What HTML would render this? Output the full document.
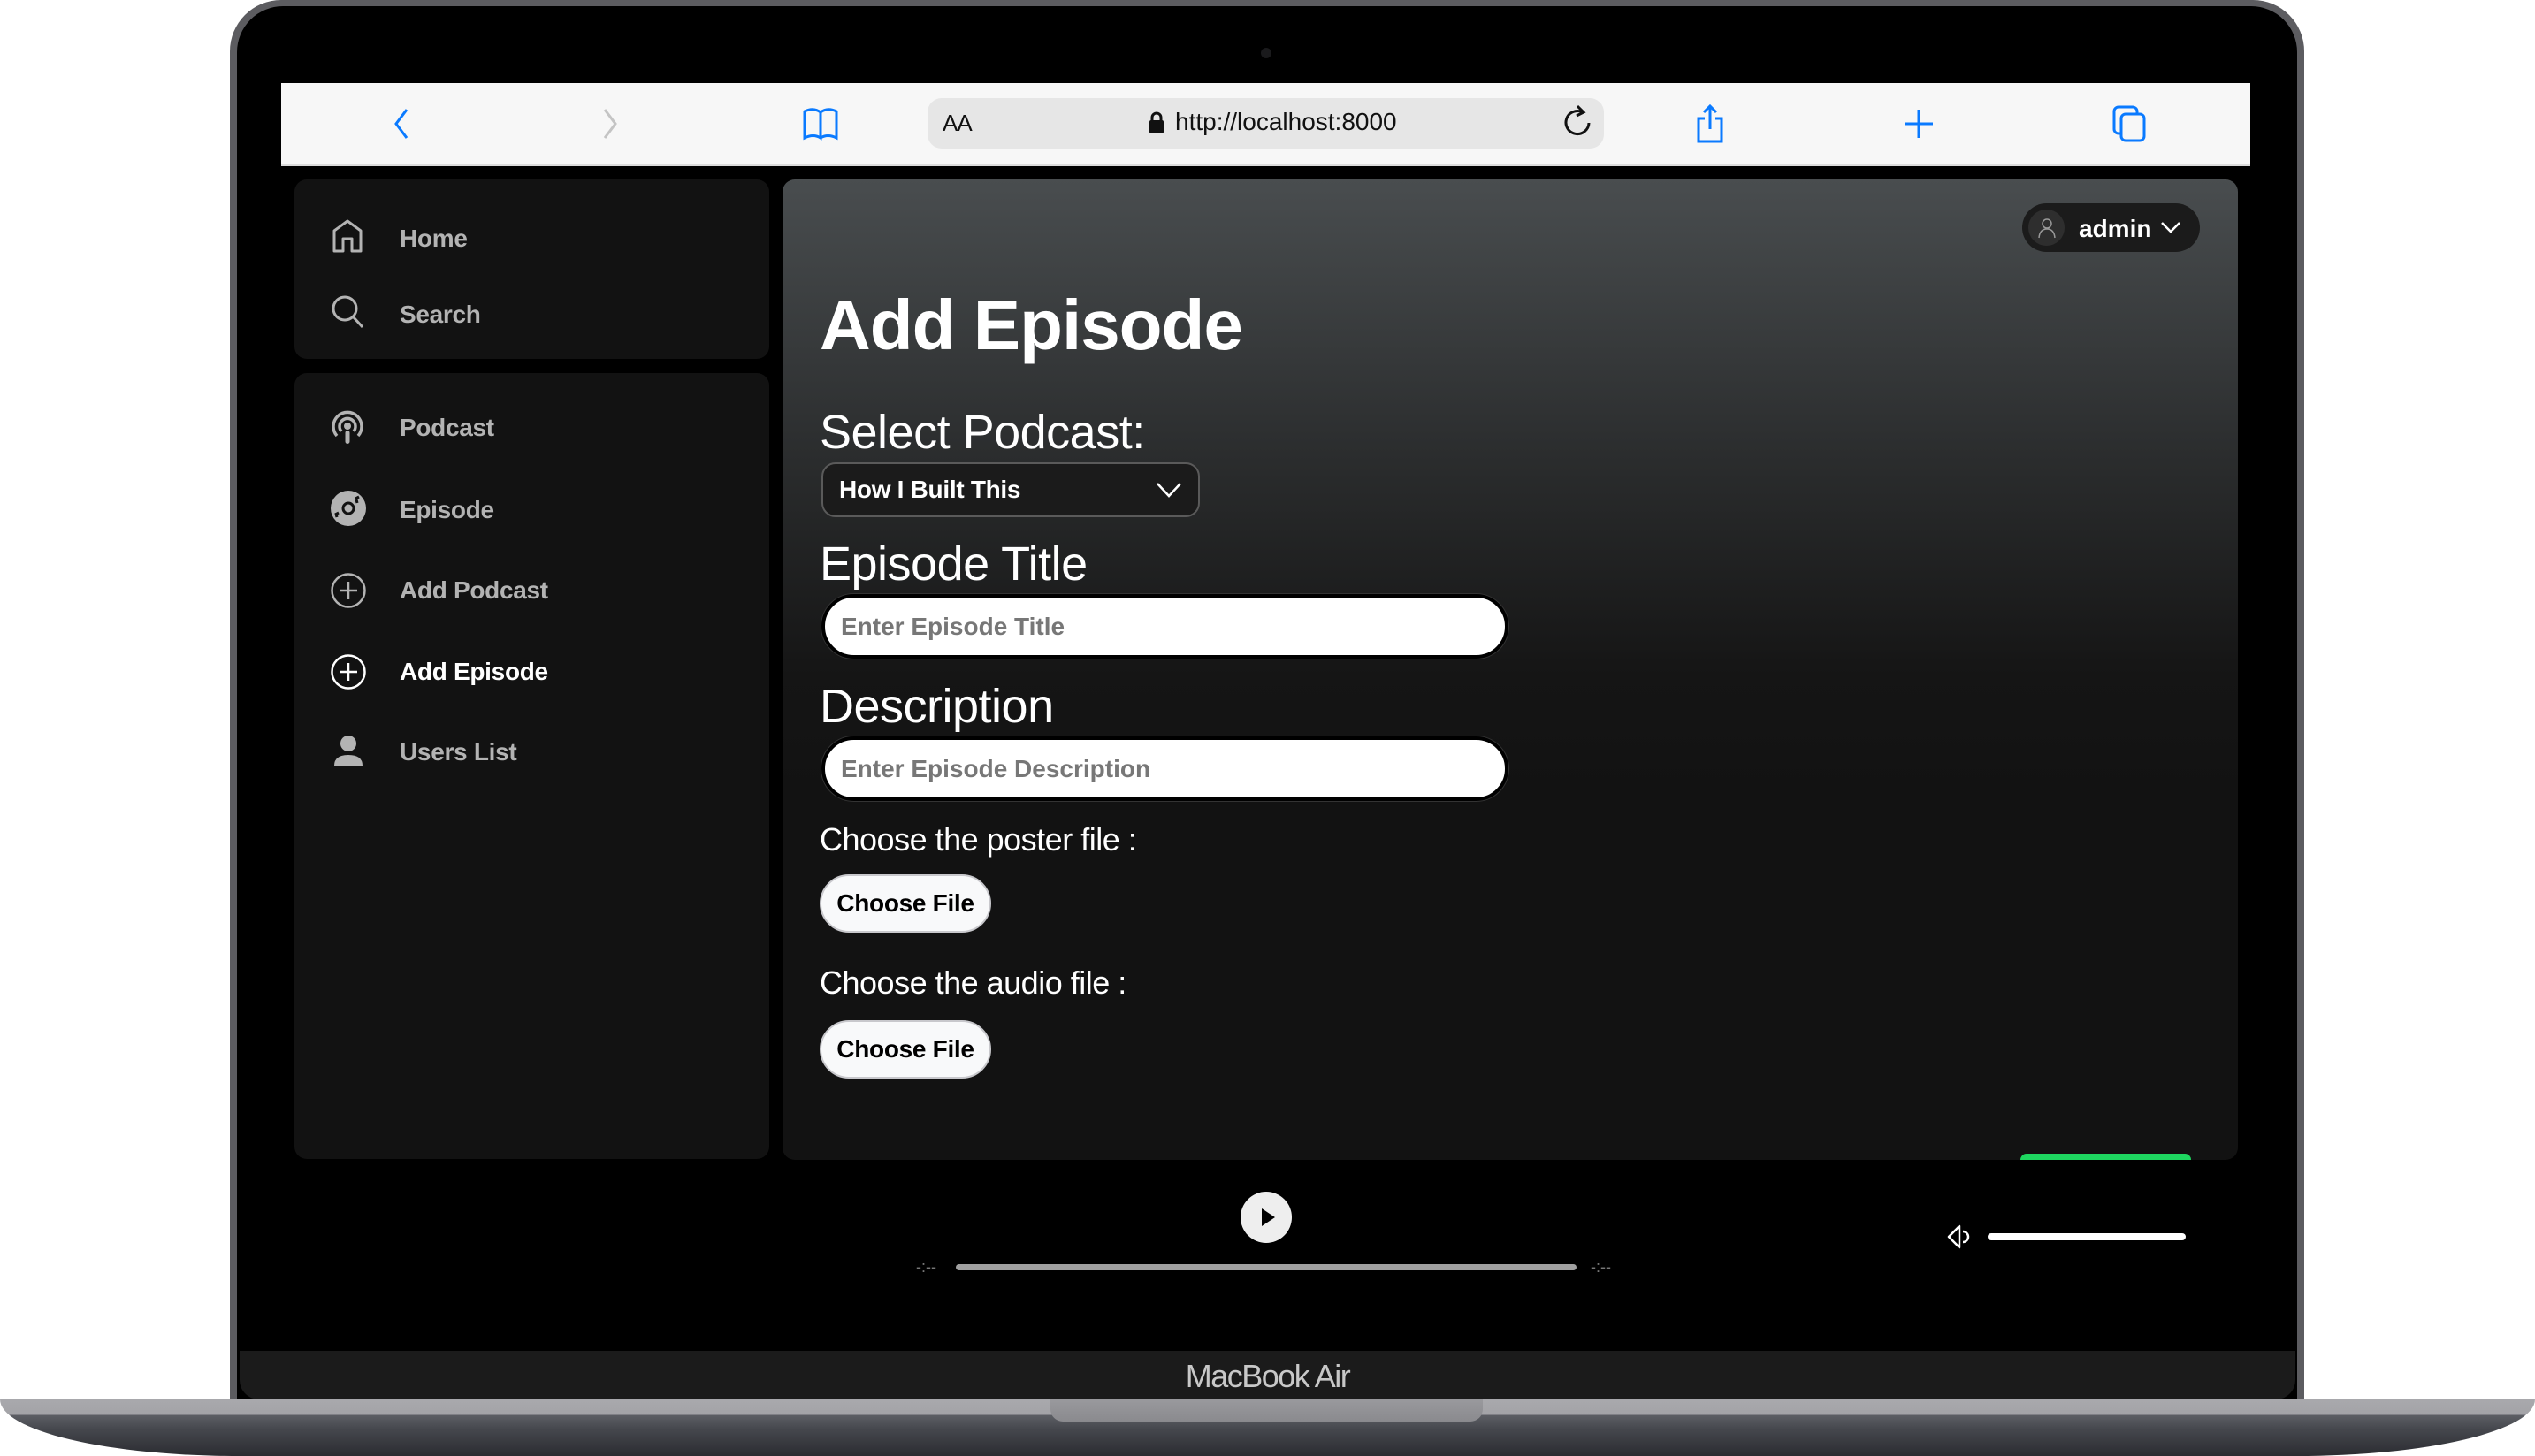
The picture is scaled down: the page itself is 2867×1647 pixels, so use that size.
<!DOCTYPE html>
<html><head><meta charset="utf-8"><style>
*{margin:0;padding:0;box-sizing:border-box}
body{width:2867px;height:1647px;background:#fff;position:relative;overflow:hidden;font-family:"Liberation Sans",sans-serif}
.abs{position:absolute}
.lid{left:260px;top:0;width:2346px;height:1600px;border-radius:58px 58px 0 0;background:#5c5c60}
.bez{left:268px;top:7px;width:2330px;height:1590px;border-radius:52px 52px 0 0;background:#000}
.chin{left:271px;top:1528px;width:2325px;height:55px;background:#1b1b1b;border-radius:0 0 22px 22px}
.base{left:0;top:1582px;width:2867px;height:65px;background:linear-gradient(#a9a9ad 0,#a3a3a7 18px,#5c5e64 19px,#45474d 35px,#2b2c31 65px);border-radius:0 0 270px 270px/0 0 64px 64px}
.notch{left:1188px;top:1582px;width:489px;height:26px;background:linear-gradient(#9a9a9e,#8a8a8e);border-radius:0 0 14px 14px}
.bar{left:318px;top:94px;width:2227px;height:94px;background:#f7f7f7;border-bottom:2px solid #dcdcdc}
.url{left:1049px;top:111px;width:765px;height:57px;background:#e6e6e6;border-radius:16px}
.side{background:#121212;border-radius:14px}
.nav{position:absolute;left:452px;font-weight:bold;font-size:28px;color:#b3b3b3;letter-spacing:-0.3px}
.ico{position:absolute;left:373px}
.main{left:885px;top:203px;width:1646px;height:1109px;border-radius:14px;background:linear-gradient(#494d4f 0,#2c2e2f 300px,#151515 560px,#121212 700px)}
.lbl{position:absolute;left:927px;color:#fff;letter-spacing:-0.5px}
.inp{position:absolute;left:929px;width:777px;height:73px;background:#fff;border:4px solid #000;border-radius:40px;box-shadow:0 0 0 1px #333}
.ph{position:absolute;left:18px;top:17px;font-size:28px;font-weight:bold;color:#777}
.btn{position:absolute;left:927px;width:194px;height:66px;background:#f8f9fa;border:2px solid #c8c8cc;border-radius:33px;font-weight:bold;font-size:28px;color:#000;text-align:center;line-height:62px;letter-spacing:-0.3px}
</style></head><body>
<div class="abs lid"></div>
<div class="abs bez"></div>
<div class="abs" style="left:1426px;top:54px;width:12px;height:12px;border-radius:50%;background:#1a1a1c"></div>
<div class="abs chin"></div>
<div class="abs" style="left:0;top:1536px;width:2867px;text-align:center;font-size:36px;color:#c8c8c8;letter-spacing:-1.5px">MacBook Air</div>
<div class="abs base"></div>
<div class="abs notch"></div>

<div class="abs bar"></div>
<svg class="abs" style="left:440px;top:120px" width="30" height="40"><path d="M20 4 L8 20 L20 36" fill="none" stroke="#0a7aff" stroke-width="3"/></svg>
<svg class="abs" style="left:675px;top:120px" width="30" height="40"><path d="M9 4 L21 20 L9 36" fill="none" stroke="#c4c4c4" stroke-width="3"/></svg>
<svg class="abs" style="left:906px;top:120px" width="46" height="40"><path d="M4 6 Q14 1 22 7 V36 Q14 31 4 36 Z M22 7 Q30 1 40 6 V36 Q30 31 22 36" fill="none" stroke="#0a7aff" stroke-width="3"/></svg>
<div class="abs url"></div>
<div class="abs" style="left:1066px;top:124px;font-size:26px;color:#111;letter-spacing:-1px">AA</div>
<svg class="abs" style="left:1297px;top:125px" width="22" height="28"><rect x="3" y="11" width="16" height="15" rx="2" fill="#111"/><path d="M6 12 V8 a5 5 0 0 1 10 0 V12" fill="none" stroke="#111" stroke-width="3"/></svg>
<div class="abs" style="left:1329px;top:122px;font-size:28px;color:#111">http://localhost:8000</div>
<svg class="abs" style="left:1766px;top:118px" width="38" height="42"><path d="M24 9 A13 13 0 1 0 31 21" fill="none" stroke="#111" stroke-width="3"/><path d="M18 2 L25 9 L17 13" fill="none" stroke="#111" stroke-width="3"/></svg>
<svg class="abs" style="left:1915px;top:116px" width="38" height="48"><path d="M13 18 H6 V44 H32 V18 H25 M19 30 V4 M12 11 L19 4 L26 11" fill="none" stroke="#0a7aff" stroke-width="3"/></svg>
<svg class="abs" style="left:2150px;top:120px" width="40" height="40"><path d="M20 4 V36 M4 20 H36" stroke="#0a7aff" stroke-width="3"/></svg>
<svg class="abs" style="left:2388px;top:118px" width="42" height="44"><rect x="3" y="3" width="26" height="30" rx="5" fill="none" stroke="#0a7aff" stroke-width="3"/><rect x="11" y="11" width="26" height="30" rx="5" fill="#f7f7f7" stroke="#0a7aff" stroke-width="3"/></svg>

<div class="abs side" style="left:333px;top:203px;width:537px;height:203px"></div>
<div class="abs side" style="left:333px;top:422px;width:537px;height:889px"></div>
<svg class="ico" style="top:247px" width="40" height="40"><path d="M5 37 V14 L20 3 L35 14 V37 H25 V23 H15 V37 Z" fill="none" stroke="#b3b3b3" stroke-width="3" stroke-linejoin="round"/></svg>
<div class="nav" style="top:254px">Home</div>
<svg class="ico" style="top:332px" width="42" height="42"><circle cx="17" cy="17" r="13" fill="none" stroke="#b3b3b3" stroke-width="3"/><path d="M26 26 L37 38" stroke="#b3b3b3" stroke-width="3"/></svg>
<div class="nav" style="top:340px">Search</div>
<svg class="ico" style="top:463px" width="40" height="42"><path d="M8 30 A16 16 0 1 1 32 30" fill="none" stroke="#b3b3b3" stroke-width="3.5"/><path d="M13 25 A9 9 0 1 1 27 25" fill="none" stroke="#b3b3b3" stroke-width="3.5"/><circle cx="20" cy="19" r="4" fill="#b3b3b3"/><rect x="17.5" y="24" width="5" height="15" rx="2.5" fill="#b3b3b3"/></svg>
<div class="nav" style="top:468px">Podcast</div>
<svg class="ico" style="top:554px" width="42" height="42"><circle cx="21" cy="21" r="20" fill="#b3b3b3"/><circle cx="21" cy="21" r="6" fill="none" stroke="#121212" stroke-width="3"/><path d="M6 28 L10 26 M29 10 L33 8 M8 31 L7 27 M30 11 L31 15" stroke="#121212" stroke-width="3"/></svg>
<div class="nav" style="top:561px">Episode</div>
<svg class="ico" style="top:647px" width="42" height="42"><circle cx="21" cy="21" r="18.5" fill="none" stroke="#b3b3b3" stroke-width="2.5"/><path d="M21 11 V31 M11 21 H31" stroke="#b3b3b3" stroke-width="2.5"/></svg>
<div class="nav" style="top:652px">Add Podcast</div>
<svg class="ico" style="top:739px" width="42" height="42"><circle cx="21" cy="21" r="18.5" fill="none" stroke="#fff" stroke-width="2.5"/><path d="M21 11 V31 M11 21 H31" stroke="#fff" stroke-width="2.5"/></svg>
<div class="nav" style="top:744px;color:#fff">Add Episode</div>
<svg class="ico" style="top:830px" width="42" height="40"><circle cx="21" cy="11" r="9" fill="#b3b3b3"/><path d="M5 36 Q5 24 21 24 Q37 24 37 36 Z" fill="#b3b3b3"/></svg>
<div class="nav" style="top:835px">Users List</div>

<div class="abs main"></div>
<div class="abs" style="left:2285px;top:1305px;width:193px;height:7px;background:#1ed760;border-radius:40px 40px 0 0"></div>
<div class="abs" style="left:2287px;top:230px;width:201px;height:55px;border-radius:28px;background:#1b1b1b"></div>
<div class="abs" style="left:2294px;top:237px;width:41px;height:41px;border-radius:50%;background:#2e2e2e"></div>
<svg class="abs" style="left:2303px;top:245px" width="24" height="26"><circle cx="12" cy="8" r="5" fill="none" stroke="#999" stroke-width="1.5"/><path d="M3 24 Q4 14 12 14 Q20 14 21 24" fill="none" stroke="#999" stroke-width="1.5"/></svg>
<div class="abs" style="left:2351px;top:243px;font-size:28px;font-weight:bold;color:#fff">admin</div>
<svg class="abs" style="left:2442px;top:247px" width="26" height="20"><path d="M3 5 L13 15 L23 5" fill="none" stroke="#fff" stroke-width="2.5"/></svg>

<div class="lbl" style="top:322px;font-size:80px;font-weight:bold;letter-spacing:-1px">Add Episode</div>
<div class="lbl" style="top:458px;font-size:54px">Select Podcast:</div>
<div class="abs" style="left:929px;top:523px;width:428px;height:62px;background:#1b1b1b;border:2px solid #5a5a5a;border-radius:16px"></div>
<div class="abs" style="left:949px;top:538px;font-size:28px;font-weight:bold;color:#fff;letter-spacing:-0.3px">How I Built This</div>
<svg class="abs" style="left:1306px;top:543px" width="32" height="22"><path d="M3 4 L16 18 L29 4" fill="none" stroke="#fff" stroke-width="2.5"/></svg>
<div class="lbl" style="top:607px;font-size:54px">Episode Title</div>
<div class="inp" style="top:672px"><div class="ph">Enter Episode Title</div></div>
<div class="lbl" style="top:768px;font-size:54px">Description</div>
<div class="inp" style="top:833px"><div class="ph">Enter Episode Description</div></div>
<div class="lbl" style="top:929px;font-size:36px">Choose the poster file :</div>
<div class="btn" style="top:989px">Choose File</div>
<div class="lbl" style="top:1091px;font-size:36px">Choose the audio file :</div>
<div class="btn" style="top:1154px">Choose File</div>

<div class="abs" style="left:1403px;top:1348px;width:58px;height:58px;border-radius:50%;background:#eee"></div>
<svg class="abs" style="left:1418px;top:1362px" width="30" height="30"><path d="M9 5 L24 15 L9 25 Z" fill="#000"/></svg>
<div class="abs" style="left:1081px;top:1430px;width:702px;height:7px;border-radius:4px;background:#a0a0a0"></div>
<div class="abs" style="left:1036px;top:1423px;font-size:18px;color:#777">-:--</div>
<div class="abs" style="left:1799px;top:1423px;font-size:18px;color:#777">-:--</div>
<svg class="abs" style="left:2201px;top:1384px" width="32" height="30"><path d="M15 3 L3 15 L15 27 Z" fill="none" stroke="#fff" stroke-width="2.5" stroke-linejoin="round"/><path d="M19 9 A6 6 0 0 1 19 21" fill="none" stroke="#fff" stroke-width="2.5"/></svg>
<div class="abs" style="left:2248px;top:1395px;width:224px;height:8px;border-radius:4px;background:#fff"></div>
</body></html>
